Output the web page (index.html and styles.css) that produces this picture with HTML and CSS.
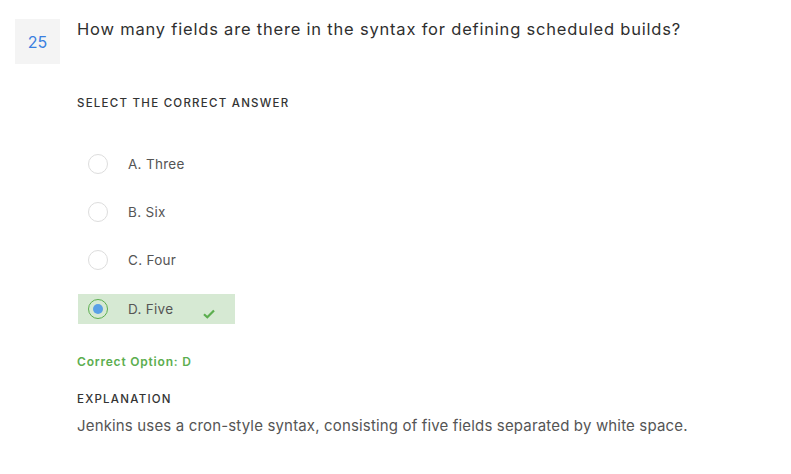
FILE: index.html
```html
<!DOCTYPE html>
<html>
<head>
<meta charset="utf-8">
<link rel="stylesheet" href="styles.css">
</head>
<body>
<div class="question">
  <div class="num">25</div>
  <div class="content">
    <h1 class="title">How many fields are there in the syntax for defining scheduled builds?</h1>
    <div class="label">SELECT THE CORRECT ANSWER</div>
    <ul class="options">
      <li class="option"><span class="radio"></span><span class="opt-text">A. Three</span></li>
      <li class="option"><span class="radio"></span><span class="opt-text">B. Six</span></li>
      <li class="option"><span class="radio"></span><span class="opt-text">C. Four</span></li>
      <li class="option correct"><span class="radio checked"></span><span class="opt-text">D. Five</span>
        <svg class="check" width="12" height="10" viewBox="0 0 12 10"><path d="M1 5.2 L4.3 8.3 L11 1.5" fill="none" stroke="#5cae4f" stroke-width="2.2"/></svg>
      </li>
    </ul>
    <div class="answer">Correct Option: D</div>
    <div class="label expl-label">EXPLANATION</div>
    <p class="expl">Jenkins uses a cron-style syntax, consisting of five fields separated by white space.</p>
  </div>
</div>
</body>
</html>
```
FILE: styles.css
```css
html, body { margin: 0; padding: 0; background: #fff; }
body { font-family: "Inter", "Liberation Sans", sans-serif; color: #333; }
.question { display: flex; padding: 19px 0 0 15px; }
.num {
  width: 45px; height: 45px; background: #f4f4f4; color: #3a7fe0;
  font-size: 16px; display: flex; align-items: center; justify-content: center;
  flex-shrink: 0;
}
.content { margin-left: 17px; }
.title { margin: 0; font-size: 16.5px; font-weight: 400; color: #2f2f2f; line-height: 22px; margin-top: -1px; letter-spacing: 0.8px; }
.label { font-size: 11.5px; font-weight: 500; color: #333; margin-top: 56px; letter-spacing: 1.25px; }
.options { list-style: none; margin: 39px 0 0 1px; padding: 0; }
.option { display: flex; align-items: center; height: 30px; width: 157px; margin-bottom: 18px; position: relative; box-sizing: border-box; padding-left: 10px; }
.option.correct { margin-top: 19px; }
.radio { width: 18px; height: 18px; border: 1px solid #ddd; border-radius: 50%; display: flex; align-items: center; justify-content: center; box-sizing: content-box; }
.radio.checked { border-color: #5cae4f; }
.radio.checked::after { content: ""; width: 10px; height: 10px; border-radius: 50%; background: #5aa0e6; }
.opt-text { margin-left: 20px; font-size: 13.5px; color: #555; letter-spacing: 0.3px; }
.correct { background: #d6e9d3; }
.check { margin-left: 30px; margin-top: 10px; }
.answer { color: #5cae4f; font-size: 12px; font-weight: 600; margin-top: 30px; letter-spacing: 0.8px; }
.expl-label { margin-top: 23px; }
.expl { margin: 10px 0 0; font-size: 15px; color: #555; letter-spacing: 0.16px; }
```
